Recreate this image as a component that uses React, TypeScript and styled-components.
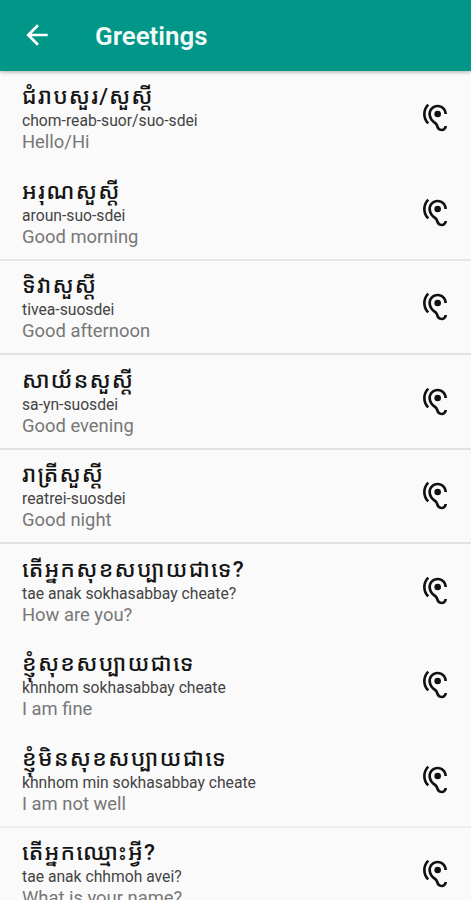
import React from "react";
import styled, { createGlobalStyle } from "styled-components";
import { MdHearing, MdArrowBack } from "react-icons/md";

const GlobalStyle = createGlobalStyle`
  * { box-sizing: border-box; }
  html, body { margin: 0; height: 100%; overflow: hidden; background: #fafafa; }
`;

const Screen = styled.div`
  height: 900px;
  width: 471px;
  overflow: hidden;
  display: flex;
  flex-direction: column;
  background: #fafafa;
  font-family: Roboto, "Noto Sans Khmer", "Noto Sans", sans-serif;
`;

const Toolbar = styled.header`
  flex: none;
  height: 71px;
  display: flex;
  align-items: center;
  padding: 0 21px 2px;
  gap: 42px;
  color: #fff;
  background: #009688;
  box-shadow: 0 1px 4px rgba(0, 0, 0, 0.32);
  z-index: 1;
`;

const BackIcon = styled(MdArrowBack)`
  display: block;
  width: 32px;
  height: 32px;
`;

const Title = styled.h1`
  margin: 0;
  padding-top: 3px;
  font-size: 25.9px;
  line-height: 30px;
  font-weight: 600;
  color: #f2fbfa;
  white-space: nowrap;
`;

const List = styled.ul`
  flex: none;
  margin: 0;
  padding: 0.5px 0 0;
  list-style: none;
`;

const Row = styled.li<{ $line: string }>`
  height: 94.5px;
  display: flex;
  justify-content: space-between;
  padding: 10.5px 20px 0 22px;
  border-bottom: 2px solid ${(p) => p.$line};
`;

const Phrase = styled.div`
  display: flex;
  flex-direction: column;
  align-items: flex-start;
  white-space: nowrap;
`;

const Khmer = styled.span<{ $spacing: number }>`
  height: 30px;
  line-height: 28px;
  font-size: 22.5px;
  font-weight: 500;
  color: #141414;
  letter-spacing: ${(p) => p.$spacing}px;
`;

const Romanized = styled.span`
  height: 18px;
  line-height: 18px;
  font-size: 15.7px;
  color: #444;
`;

const English = styled.span`
  height: 24px;
  line-height: 24px;
  font-size: 18.4px;
  color: #777;
`;

const ListenIcon = styled(MdHearing)`
  flex: none;
  width: 32px;
  height: 32px;
  margin-top: 20.2px;
  color: #111;
`;

const phrases = [
  { km: "ជំរាបសួរ/សួស្តី", latin: "chom-reab-suor/suo-sdei", en: "Hello/Hi", line: "#f8f8f8", spacing: 1.1 },
  { km: "អរុណសួស្តី", latin: "aroun-suo-sdei", en: "Good morning", line: "#e6e6e6", spacing: 1.3 },
  { km: "ទិវាសួស្តី", latin: "tivea-suosdei", en: "Good afternoon", line: "#e2e2e2", spacing: 1.2 },
  { km: "សាយ័នសួស្តី", latin: "sa-yn-suosdei", en: "Good evening", line: "#e2e2e2", spacing: 1.2 },
  { km: "រាត្រីសួស្តី", latin: "reatrei-suosdei", en: "Good night", line: "#e2e2e2", spacing: 1.1 },
  { km: "តើអ្នកសុខសប្បាយជាទេ?", latin: "tae anak sokhasabbay cheate?", en: "How are you?", line: "#fafafa", spacing: 1.25 },
  { km: "ខ្ញុំសុខសប្បាយជាទេ", latin: "khnhom sokhasabbay cheate", en: "I am fine", line: "#f8f8f8", spacing: 1.3 },
  { km: "ខ្ញុំមិនសុខសប្បាយជាទេ", latin: "khnhom min sokhasabbay cheate", en: "I am not well", line: "#eeeeee", spacing: 1.35 },
  { km: "តើអ្នកឈ្មោះអ្វី?", latin: "tae anak chhmoh avei?", en: "What is your name?", line: "#e2e2e2", spacing: 1.3 },
];

export default function App() {
  return (
    <Screen>
      <GlobalStyle />
      <Toolbar>
        <BackIcon />
        <Title>Greetings</Title>
      </Toolbar>
      <List>
        {phrases.map((p) => (
          <Row key={p.km} $line={p.line}>
            <Phrase>
              <Khmer lang="km" $spacing={p.spacing}>{p.km}</Khmer>
              <Romanized>{p.latin}</Romanized>
              <English>{p.en}</English>
            </Phrase>
            <ListenIcon />
          </Row>
        ))}
      </List>
    </Screen>
  );
}
